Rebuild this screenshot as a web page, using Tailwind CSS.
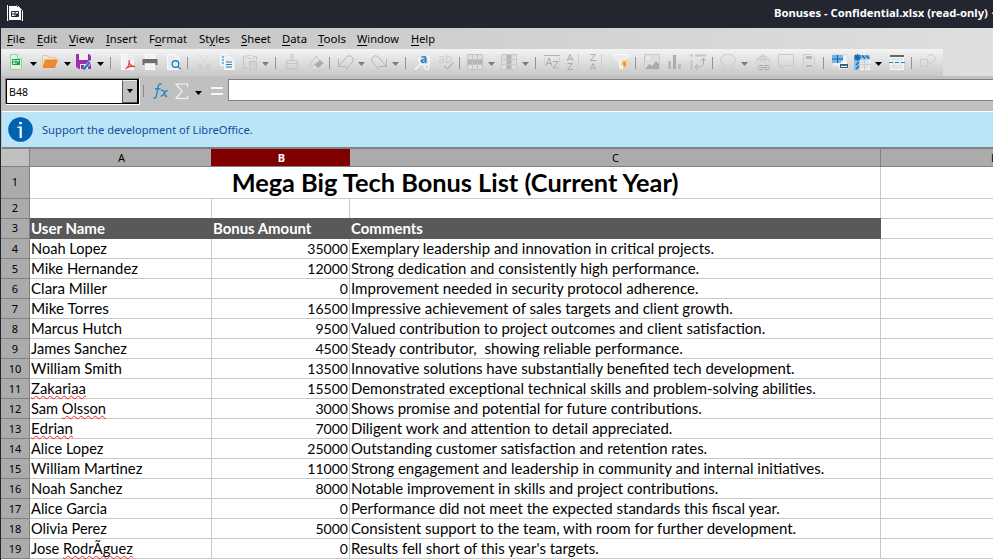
<!DOCTYPE html>
<html lang="en">
<head>
<meta charset="utf-8">
<title>Bonuses - Confidential.xlsx</title>
<script src="https://cdn.jsdelivr.net/npm/@tailwindcss/browser@4"></script>
</head>
<body class="w-[993px] h-[560px] overflow-hidden bg-[#23262f] font-['Noto_Sans',sans-serif] text-black">
<div class="flex flex-col w-[993px] h-[560px] overflow-hidden">
  <header class="h-7 shrink-0 flex items-start bg-[#23262f] text-white">
    <svg class="ml-[7px] mt-[5px] w-4 h-4 shrink-0" viewBox="0 0 16 16"><path fill="#fff" d="M0 0h16v16H0z"/><path d="M1.500 0v15.500h13V5L9.500.5h-8" fill="#fff" stroke="#23262f"/><path d="M10 0h6v6z" fill="#23262f"/><path d="M11 1v4h4z" fill="#fff"/><path d="M4.500 6.500h7v5h-7zM4.500 9h7M8 6.500v5" fill="none" stroke="#23262f"/><path d="M9 9h2v2H9z" fill="#23262f"/></svg>
    <div class="ml-[751px] mt-[4px] text-[12px] leading-[18px] font-bold whitespace-pre flex"><span data-w="214">Bonuses - Confidential.xlsx (read-only)</span><span class="ml-[4px]">-</span></div>
  </header>

  <div class="ml-px flex flex-col grow min-h-0 bg-[#c0c0c0]">
    <nav class="h-[21px] shrink-0 flex items-center pl-[6px] text-[12px] leading-[20px] bg-linear-to-r from-[#c3c3c3] to-[#dfdfdf]">
      <span class="w-[30px] whitespace-nowrap"><span data-w="18"><u class="underline-offset-2">F</u>ile</span></span>
      <span class="w-[32px] whitespace-nowrap"><span data-w="20"><u class="underline-offset-2">E</u>dit</span></span>
      <span class="w-[37px] whitespace-nowrap"><span data-w="25"><u class="underline-offset-2">V</u>iew</span></span>
      <span class="w-[43px] whitespace-nowrap"><span data-w="31"><u class="underline-offset-2">I</u>nsert</span></span>
      <span class="w-[50px] whitespace-nowrap"><span data-w="38">F<u class="underline-offset-2">o</u>rmat</span></span>
      <span class="w-[42px] whitespace-nowrap"><span data-w="31">St<u class="underline-offset-2">y</u>les</span></span>
      <span class="w-[41px] whitespace-nowrap"><span data-w="30"><u class="underline-offset-2">S</u>heet</span></span>
      <span class="w-[36px] whitespace-nowrap"><span data-w="25"><u class="underline-offset-2">D</u>ata</span></span>
      <span class="w-[39px] whitespace-nowrap"><span data-w="28"><u class="underline-offset-2">T</u>ools</span></span>
      <span class="w-[54px] whitespace-nowrap"><span data-w="42"><u class="underline-offset-2">W</u>indow</span></span>
      <span class="whitespace-nowrap"><span data-w="24"><u class="underline-offset-2">H</u>elp</span></span>
    </nav>

    <div class="h-[27px] shrink-0 bg-linear-to-r from-[#c3c3c3] to-[#dfdfdf]">
      <div id="tools" class="w-[942px] h-[27px] flex items-center bg-linear-to-b from-[#f4f4f4] to-[#c8c8c8]"></div>
    </div>

    <div class="h-[35px] shrink-0 flex items-start">
      <div class="ml-[4px] mt-[2px] w-[135px] h-[27px] border-r border-b border-white border-l border-t border-l-[#808080] border-t-[#808080]">
        <div class="w-[133px] h-[25px] border border-r-2 border-black bg-white flex items-center">
          <span class="ml-[2px] grow text-[11px] leading-[14px]"><span data-w="19">B48</span></span>
          <span class="w-[15px] h-full bg-[#c0c0c0] border-l border-t border-l-[#555] border-t-[#eee] border-b border-b-[#555] flex justify-center pt-[8px]"><svg class="w-[6px] h-[4px]" viewBox="0 0 6 4"><path d="M0 0h6L3 4z"/></svg></span>
        </div>
      </div>
      <i class="ml-[3px] mt-[9px] w-px h-[12px] bg-[#8c8c8c]"></i>
      <svg class="ml-[9px] mt-[6px] w-[17px] h-[19px]" viewBox="0 0 18 19" fill="none" stroke="#2687c9" stroke-width="1.500"><path d="M9.500 2C7 .5 5.800 2 5.300 5L3.700 13.500c-.5 3-1.600 3.500-3.200 2.500M2 6.500h6M8.500 8.500c2.500-1 3 .5 3.700 3.500s1.500 3 3 2M15.500 8.500c-2 0-2.500 1.500-3.500 3s-2 3-4 3"/></svg>
      <svg class="ml-[5px] mt-[7px] w-[14px] h-[17px]" viewBox="0 0 14 17" fill="none" stroke="#f4f4f4" stroke-width="1.200"><path d="M12.500 4V1H1l6 7.300L1 15.500h11.500v-3"/></svg>
      <svg class="ml-[6px] mt-[15px] w-[7px] h-[4px]" viewBox="0 0 7 4"><path d="M0 0h7L3.500 4z"/></svg>
      <svg class="ml-[9px] mt-[11px] w-[12px] h-[9px]" viewBox="0 0 12 9"><path d="M0 0h12v2H0zM0 6h12v2H0z" fill="#f6f6f6"/></svg>
      <div class="ml-[5px] mt-[3px] grow h-[22px] bg-white border border-r-0 border-[#808080]"></div>
    </div>

    <div class="h-[38px] shrink-0 ml-px bg-[#bae5f8] border-t border-white border-b-2 border-b-[#808080] flex items-center">
      <svg class="ml-[6px] w-[25px] h-[25px]" viewBox="0 0 25 25"><circle cx="12.500" cy="12.500" r="12.300" fill="#0063b1"/><path d="M11.200 5h2.600v2.200h-2.600zM9.500 9.500h4.300V21h-2.200V11H9.500z" fill="#fff"/></svg>
      <span class="ml-[9px] text-[11px] leading-[16px] text-[#134d99] whitespace-nowrap"><span data-w="211">Support the development of LibreOffice.</span></span>
    </div>

    <div class="flex h-[18px] shrink-0 bg-[#ababab] text-[11px] leading-[17px] text-center">
      <div class="w-[29px] shrink-0 bg-[#c0c0c0] border-r border-b border-[#808080]"></div>
      <div class="w-[181px] shrink-0 pl-[2px] border-b border-[#808080]">A</div>
      <div class="w-[139px] shrink-0 bg-[#800000] border-b border-[#808080] text-white font-bold pl-[2px]">B</div>
      <div class="w-[531px] shrink-0 border-r border-b border-[#808080] pl-px">C</div>
      <div class="grow border-b border-[#808080] flex justify-end overflow-hidden"><span class="w-[2px] overflow-hidden">D</span></div>
    </div>
    <main id="sheet" class="grow min-h-0 overflow-hidden bg-white font-['Lato',sans-serif]"></main>
  </div>
</div>

<script>
const G = '#c4c4c4', D = '#aaaaaa', W = '#fafafa', B = '#1e86cc';
const icons = {
  new: `<path d="M2.500.5h7l4 4v11h-11z" fill="#e4efe6" stroke="#8ed6a0"/><path d="M9.500.5v4h4" fill="#fff" stroke="#8ed6a0"/><path d="M4.500 5.500h7v5h-7zM4.500 8h7M8 5.500v5" fill="none" stroke="#18a24a"/><path d="M9 8h3v3H9z" fill="#18a24a"/>`,
  open: `<path d="M.5 13V1.500h5l1.500 2h6.500V6" fill="none" stroke="#f2c879"/><path d="M3 5.500h13L13 14H.5z" fill="#ef8733"/>`,
  save: `<path d="M0 0h13l2 2v13H3l-3-2z" fill="#9b2fae"/><path d="M3 0h9v6H3zM4 10h8v5H4z" fill="#eee"/><path d="M5 11h3v4H5z" fill="#9b2fae"/><path d="M7 16l1-4 6-6 2.500 2.500-6 6z" fill="#eee"/><path d="M7.500 15.500L14 8" stroke="#1e7fcb" stroke-width="2.500"/>`,
  pdf: `<path d="M1.500.5h8l4 4v11h-12z" fill="#f3f3f3" stroke="${W}"/><path d="M9.500.5v4h4" fill="none" stroke="#ddd"/><path d="M9 6c1 3-.5 7-3.500 9M9 8c.5 2.500 3 4.500 6 4.500-3-.8-6 0-8.500 1.500" fill="none" stroke="#dc4340" stroke-width="1.300"/>`,
  print: `<path d="M3.500.5h9v5h-9zM3.500 10.500h9v5h-9z" fill="#f2f2f2" stroke="${W}"/><path d="M.5 5h15v6h-2V9h-11v2h-2z" fill="#6e6e6e"/>`,
  preview: `<path d="M1.500.5h8l4 4v11h-12z" fill="#eaeaea" stroke="${W}"/><path d="M9.500.5v4h4" fill="none" stroke="${W}"/><circle cx="9.500" cy="10" r="3.300" fill="#eee" stroke="${B}" stroke-width="1.400"/><path d="M12 12.500l2.500 2.500" stroke="${B}" stroke-width="1.500"/>`,
  cut: `<g fill="none" stroke="${G}"><path d="M3 0l6.500 11M13 0L6 11" stroke="#d9d9d9"/><circle cx="4" cy="13" r="2"/><circle cx="12" cy="13" r="2"/></g>`,
  copy: `<path d="M.5.5h7l3 3v8H.5z" fill="#e8e8e8" stroke="${W}"/><path d="M4.500 3.500h6l3.500 3v9H4.500z" fill="#eee" stroke="${W}"/><path d="M2 3h2M2 6h2M2 9h2M6 8h6M6 10.500h6M6 13h6" stroke="${B}"/>`,
  paste: `<g fill="none" stroke="${G}"><path d="M6 14.500H1.500v-12h2M12 2.500h2.500V6"/><path d="M4.500 1.500h7v3h-7z" stroke="#d4d4d4"/><path d="M7.500 7.500h7v8h-7z" fill="#d2d2d2"/></g>`,
  brush: `<g fill="none" stroke="${G}"><path d="M7 .5h2v6H7zM2.500 6.500h11v3h-11z"/><path d="M2.500 9.500v5h11v-5M2 15h12"/></g>`,
  eraser: `<path d="M1 12L8 2l3 4" fill="none" stroke="${G}"/><path d="M1 12h5" stroke="${G}"/><path d="M6 11l6-5 3.500 3L9 15z" fill="${D}"/><path d="M4 13l3-2 3 3-2 1.500z" fill="#ddd"/>`,
  undo: `<path d="M.5 5v7.500H8M.5 12.500L8.500 3C12 0 17 3.500 14.500 8L8 15.500" fill="none" stroke="#b4b4b4"/>`,
  redo: `<path d="M15.500 5v7.500H8M15.500 12.500L7.500 3C4 0-1 3.500 1.500 8L8 15.500" fill="none" stroke="#b4b4b4"/>`,
  find: `<text x="6" y="8.500" font-size="12" font-weight="bold" fill="${B}">a</text><text x="9.500" y="16" font-size="10.500" fill="${W}">d</text><path d="M7 9.500l-6 6M5.500 3a6 6 0 0 0 1.500 7c1 .8 2 1 3 .8M13 1.500c2.500 2 3 5 2 8" stroke="${W}" stroke-width="1.300" fill="none"/>`,
  spell: `<text x="0" y="9" font-size="12" fill="#cecece">ab</text><path d="M6 12l3.500 3 6-6.500" fill="none" stroke="#b2b2b2" stroke-width="1.200"/>`,
  row: `<path d="M0 .5h16v15H0z" fill="#dedede"/><path d="M0 5h16v6H0z" fill="#b5b5b5"/><path d="M.5.5h15v15H.5zM5.500 0v16M10.500 0v16M0 5.500h16M0 10.500h16" fill="none" stroke="#c2c2c2"/>`,
  col: `<path d="M0 .5h16v15H0z" fill="#dedede"/><path d="M5 0h6v16H5z" fill="#b5b5b5"/><path d="M.5.5h15v15H.5zM5.500 0v16M10.500 0v16M0 5.500h16M0 10.500h16" fill="none" stroke="#c8c8c8"/>`,
  sort: `<path d="M.5 3.500v12h15v-12" fill="none" stroke="#d2d2d2"/><path d="M0 1.500h16" stroke="#b5b5b5"/><path d="M2 12l3-8 3 8M3 9.500h4M9 7.500h5L9 14h5.500" fill="none" stroke="#aaa"/>`,
  az: `<path d="M0 7l3-6.500L6 7M1 5h4M.5 9.500h5l-5 6h5.500" fill="none" stroke="#acacac"/><path d="M11.500 0v15M9 12.500l2.500 3 2.500-3" fill="none" stroke="#cecece"/>`,
  za: `<path d="M.5.5h5l-5 6H6M0 16l3-6.500L6 16M1 14h4" fill="none" stroke="#acacac"/><path d="M11.500 0v15M9 12.500l2.500 3 2.500-3" fill="none" stroke="#cecece"/>`,
  filter: `<path d="M.5.5h15v2l-6 6v7l-3-2v-5l-6-6z" fill="#ececec" stroke="${W}"/><path d="M10 6h5l-2 3h3l-7 7 2-5H8z" fill="#f9cf70"/><path d="M10 8h3l-1.500 2.500h2L11 13z" fill="#ee7d2c"/>`,
  image: `<path d="M.5.5h15v15H.5z" fill="#dedede" stroke="#cacaca"/><path d="M1 15l4-5 3 2 4-5 3 3v5z" fill="#aaa"/><circle cx="4" cy="4" r="1.500" fill="#f4f4f4"/>`,
  chart: `<path d="M1 7h3v8H1z" fill="#bbb"/><path d="M6 1h3v14H6z" fill="#ababab"/><path d="M11 10h3v5h-3z" fill="#bbb"/>`,
  pivot: `<g fill="none" stroke="#acacac"><path d="M5 1.500h11M1.500 6v10M0 1.500h3" stroke="#c4c4c4" stroke-width="2"/><path d="M13.500 5v4c0 3-2 4-8 4M10.500 7l3-3 2.500 3M8 10l-3 3 3 3"/></g>`,
  omega: `<path d="M0 15.500h5.500V13C-1 10-1 .5 8 .5s9 9.500 2.500 12.500v2.500H16" fill="none" stroke="#c8c8c8"/>`,
  link: `<g fill="none" stroke="#c8c8c8"><path d="M1 9a7 7 0 1 1 14 0M5 9c0-10 6-10 6 0M8 1v8M1.500 5.500h13"/><path d="M8 11.500H4.500c-2 0-2 4 0 4H8M9 11.500h4c2 0 2 4 0 4H9M5.500 13.500h7" stroke="#aaa"/></g>`,
  comment: `<path d="M.5.500h15v11h-9l-3 3.500v-3.500h-3z" fill="none" stroke="#cacaca"/>`,
  header: `<path d="M2.500.5h8l3 3v12h-11z" fill="none" stroke="#ccc"/><path d="M5 2h6v3H5zM5 11h6v2H5z" fill="#b6b6b6"/>`,
  area: `<path d="M.5.5h15v12H.5z" fill="#eee" stroke="#ddd"/><path d="M0 1h11v8H0z" fill="#75b5e8"/><path d="M0 5h11M5.500 1v8" stroke="#185f9f"/><path d="M9.500 7.500h5v3h-5zM7.500 10.500h8v4h-8z" fill="#fff" stroke="#eee"/><path d="M8 10h8v4H8z" fill="#555"/><path d="M9 11h6v1H9z" fill="${B}"/><path d="M9 12h6v1H9z" fill="#fff"/>`,
  freeze: `<path d="M5 5h10.500v10.500H5z" fill="#e2e2e2" stroke="${W}"/><path d="M10.500 5v11M5 10.500h11" stroke="#ccc"/><path d="M0 1h16v4.500H5.500V16H0z" fill="#86c2ee"/><path d="M3.500 0v7M0 3.500h7M1 1l5 5M6 1L1 6M8 1.500l3 3M12 1.500l3 3M5 8l-3 3M5 12l-3 3" stroke="#1567ad" stroke-width="1.400"/>`,
  split: `<path d="M1.500 3.500h13v12h-13z" fill="#e4e4e4" stroke="${W}"/><path d="M1 1h14v2H1z" fill="#666"/><path d="M0 8.500h4M6 8.500h4M12 8.500h4" stroke="${B}"/><path d="M1 7h14M1 10h14" stroke="#f8f8f8"/>`,
  shapes: `<path d="M.5 5.500h7v7h-7zM12 .5a4 4 0 1 1-2 8M7.500 3a4 4 0 0 1 4.500-2.500M6 15.500l5-5-4-4" fill="none" stroke="#cbcbcb"/>`
};
const strip = [[8,'new'],[30,'v'],[42,'open'],[64,'v'],[76,'save'],[97,'v'],[110,'|'],[120,'pdf'],[142,'print'],[166,'preview'],[187,'|'],[196,'cut'],[220,'copy'],[242,'paste'],[262,'w'],[275,'|'],[284,'brush'],[308,'eraser'],[329,'|'],[338,'undo'],[358,'w'],[371,'redo'],[392,'w'],[405,'|'],[414,'find'],[438,'spell'],[459,'|'],[467,'row'],[488,'w'],[501,'col'],[522,'w'],[535,'|'],[544,'sort'],[567,'az'],[590,'za'],[613,'filter'],[635,'|'],[644,'image'],[667,'chart'],[690,'pivot'],[712,'|'],[720,'omega'],[741,'w'],[755,'link'],[778,'comment'],[801,'header'],[823,'|'],[832,'area'],[854,'freeze'],[875,'v'],[889,'split'],[911,'|'],[920,'shapes']];
let edge = 1, html = '';
for (const [x, k] of strip) {
  const m = `style="margin-left:${x - edge}px"`;
  if (k === '|') { html += `<i ${m} class="w-px h-3 shrink-0 bg-[#929292]"></i>`; edge = x + 1; }
  else if (k === 'v' || k === 'w') { html += `<svg ${m} class="w-[7px] h-[4px] mt-[3px] shrink-0" viewBox="0 0 7 4"><path d="M0 0h7L3.500 4z" fill="${k === 'v' ? '#000' : '#7c7c7c'}"/></svg>`; edge = x + 7; }
  else { html += `<svg ${m} class="w-4 h-4 -mt-px shrink-0" viewBox="0 0 16 16">${icons[k]}</svg>`; edge = x + 16; }
}
document.getElementById('tools').innerHTML = html;

const rows = [
 ['Noah Lopez',76,35000,'Exemplary leadership and innovation in critical projects.',363.5],
 ['Mike Hernandez',107,12000,'Strong dedication and consistently high performance.',348.5],
 ['Clara Miller',76,0,'Improvement needed in security protocol adherence.',348],
 ['Mike Torres',78,16500,'Impressive achievement of sales targets and client growth.',382],
 ['Marcus Hutch',91,9500,'Valued contribution to project outcomes and client satisfaction.',414.5],
 ['James Sanchez',96,4500,'Steady contributor,  showing reliable performance.',332],
 ['William Smith',91,13500,'Innovative solutions have substantially benefited tech development.',444],
 ['~Zakariaa~',55,15500,'Demonstrated exceptional technical skills and problem-solving abilities.',465],
 ['Sam ~Olsson~',75,3000,'Shows promise and potential for future contributions.',351],
 ['~Edrian~',42,7000,'Diligent work and attention to detail appreciated.',321.5],
 ['Alice Lopez',72.5,25000,'Outstanding customer satisfaction and retention rates.',356.5],
 ['William Martinez',111.5,11000,'Strong engagement and leadership in community and internal initiatives.',474],
 ['Noah Sanchez',91.5,8000,'Notable improvement in skills and project contributions.',367.5],
 ['Alice Garcia',76,0,'Performance did not meet the expected standards this fiscal year.',429],
 ['Olivia Perez',76,5000,'Consistent support to the team, with room for further development.',445.5],
 ['Jose ~RodrÃguez~',102,0,"Results fell short of this year's targets.",248]
];
const num = n => `<div class="w-[29px] shrink-0 bg-[#ababab] border-r border-b border-[#808080] font-['Noto_Sans',sans-serif] text-[11px] flex items-center justify-center">${n}</div>`;
const tail = `<div class="grow border-b border-[#c8c8c8]"></div>`;
let s = `<div class="flex h-8">${num(1)}<div class="w-[851px] shrink-0 border-r border-b border-[#c8c8c8] text-center font-bold text-[24px] leading-[30px] whitespace-nowrap"><span data-w="447">Mega Big Tech Bonus List (Current Year)</span></div>${tail}</div>
<div class="flex h-5">${num(2)}<div class="w-[182px] shrink-0 border-r border-[#c8c8c8]"></div><div class="w-[138px] shrink-0 border-r border-[#c8c8c8]"></div><div class="w-[531px] shrink-0 border-r border-[#c8c8c8]"></div>${tail}</div>
<div class="flex h-5">${num(3)}<div class="-mt-px w-[851px] shrink-0 h-[21px] bg-[#595959] text-white font-bold text-[14.5px] leading-[21px] flex whitespace-nowrap"><div class="w-[182px] pl-px"><span data-w="74">User Name</span></div><div class="w-[138px] pl-px"><span data-w="98.5">Bonus Amount</span></div><div class="pl-px"><span data-w="72">Comments</span></div></div>${tail}</div>`;
rows.forEach(([n, nw, a, c, cw], i) => {
  n = n.replace(/~(.+?)~/, '<span class="underline decoration-wavy decoration-[#ff2020] decoration-1 underline-offset-1 [text-decoration-skip-ink:none]">$1</span>');
  s += `<div class="flex h-5 text-[14.5px] leading-[19px] whitespace-pre">${num(i + 4)}<div class="w-[182px] shrink-0 border-r border-b border-[#c8c8c8] pl-px"><span data-w="${nw}">${n}</span></div><div class="w-[138px] shrink-0 border-r border-b border-[#c8c8c8] text-right pr-px"><span data-w="${String(a).length * 8.15}">${a}</span></div><div class="w-[531px] shrink-0 border-r border-b border-[#c8c8c8] pl-px"><span data-w="${cw}">${c}</span></div>${tail}</div>`;
});
document.getElementById('sheet').innerHTML = s;

// Scale each label's type so that it takes up its nominal width
function fit() {
  document.querySelectorAll('[data-w]').forEach(e => {
    e.style.fontSize = '';
    const size = parseFloat(getComputedStyle(e).fontSize);
    const r = +e.dataset.w / e.getBoundingClientRect().width;
    if (r > 0.85 && r < 1.18) e.style.fontSize = (size * r).toFixed(3) + 'px';
  });
}
fit();
addEventListener('load', () => { fit(); requestAnimationFrame(fit); });
document.fonts.ready.then(fit);
setTimeout(fit, 60);
</script>
</body>
</html>
